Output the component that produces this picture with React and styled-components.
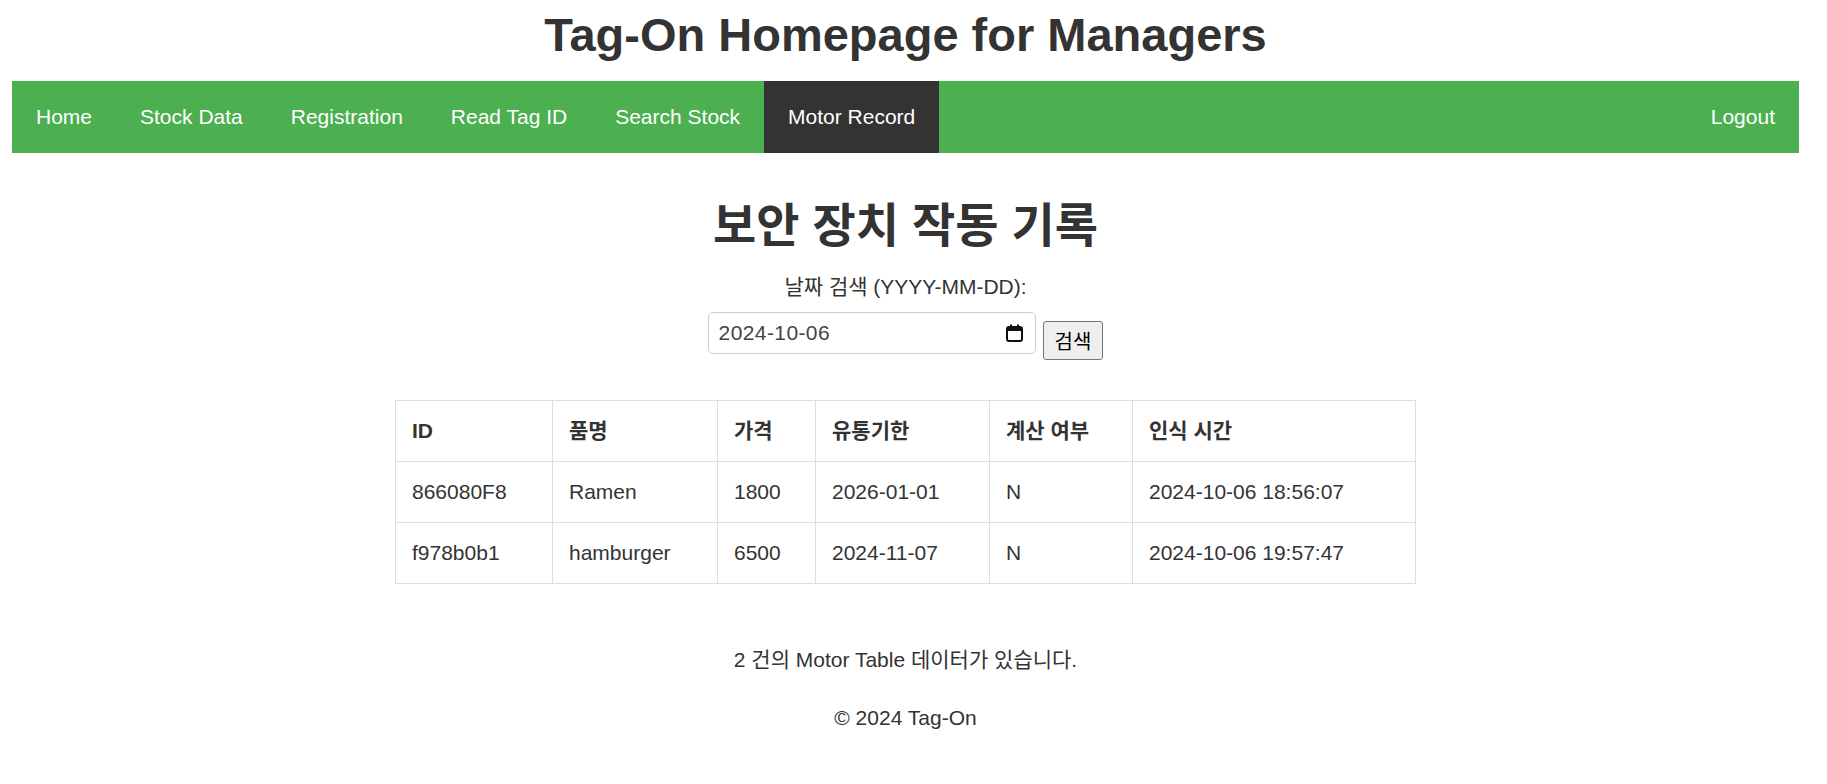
import React from 'react';
import styled, { createGlobalStyle } from 'styled-components';

const GlobalStyle = createGlobalStyle`
  body {
    margin: 0;
    background: #fff;
    color: #333;
    font-family: 'Liberation Sans', Arial, 'Noto Sans CJK KR', sans-serif;
  }
`;

const Page = styled.div`
  padding: 8px 28px 0 12px;
`;

const SiteTitle = styled.h1`
  margin: 0 0 19px;
  font-size: 47px;
  line-height: 54px;
  font-weight: bold;
  text-align: center;
  color: #333;
`;

const Nav = styled.nav`
  display: flex;
  background-color: #4caf50;
  height: 72px;
`;

const NavLink = styled.a`
  display: block;
  padding: 24px;
  font-size: 21px;
  line-height: 24px;
  color: #fff;
  text-decoration: none;
  background-color: ${(props) => (props.active ? '#333' : 'transparent')};
  ${(props) => (props.right ? 'margin-left: auto;' : '')}
`;

const Main = styled.main`
  display: flex;
  flex-direction: column;
  align-items: center;
  text-align: center;
`;

const PageTitle = styled.h2`
  margin: 45px 0 22px;
  font-size: 47px;
  line-height: 55px;
  font-weight: bold;
`;

const Label = styled.label`
  display: block;
  font-size: 21px;
  line-height: 24px;
`;

const SearchRow = styled.form`
  display: flex;
  align-items: flex-start;
  gap: 7px;
  margin-top: 13px;
`;

const DateField = styled.div`
  box-sizing: border-box;
  display: flex;
  align-items: center;
  width: 328px;
  height: 42px;
  padding: 0 12px 0 10px;
  border: 1px solid #ccc;
  border-radius: 5px;
  background: #fff;
`;

const DateText = styled.input`
  flex: 1;
  min-width: 0;
  border: 0;
  outline: none;
  padding: 0;
  background: transparent;
  font-family: 'Liberation Sans', Arial, sans-serif;
  font-size: 21px;
  letter-spacing: 0.4px;
  color: #444;
`;

const CalendarIcon = styled.svg`
  width: 17px;
  height: 18px;
  flex: none;
`;

const SearchButton = styled.button`
  box-sizing: border-box;
  margin-top: 9px;
  height: 39px;
  padding: 0 11px;
  background: #efefef;
  border: 1px solid #767676;
  border-radius: 3px;
  font-family: 'Liberation Sans', 'Noto Sans CJK KR', sans-serif;
  font-size: 20px;
  color: #000;
`;

const Table = styled.table`
  margin-top: 40px;
  width: 1020px;
  table-layout: fixed;
  border-collapse: collapse;
  text-align: left;
`;

const Cell = styled.td`
  padding: 18px 16px;
  border: 1px solid #ddd;
  font-size: 21px;
  line-height: 24px;
  font-weight: ${(props) => (props.head ? 'bold' : 'normal')};
  white-space: nowrap;
`;

const Note = styled.p`
  margin: 64px 0 0;
  font-size: 21px;
  line-height: 24px;
`;

const Footer = styled.footer`
  margin-top: 34px;
  font-size: 21px;
  line-height: 24px;
  text-align: center;
`;

const links = ['Home', 'Stock Data', 'Registration', 'Read Tag ID', 'Search Stock', 'Motor Record'];
const colWidths = [157, 165, 98, 174, 143, 283];
const heads = ['ID', '품명', '가격', '유통기한', '계산 여부', '인식 시간'];
const rows = [
  ['866080F8', 'Ramen', '1800', '2026-01-01', 'N', '2024-10-06 18:56:07'],
  ['f978b0b1', 'hamburger', '6500', '2024-11-07', 'N', '2024-10-06 19:57:47'],
];

export default function App() {
  return (
    <Page>
      <GlobalStyle />
      <SiteTitle>Tag-On Homepage for Managers</SiteTitle>
      <Nav>
        {links.map((l) => (
          <NavLink key={l} href="#" active={l === 'Motor Record' ? 1 : 0}>
            {l}
          </NavLink>
        ))}
        <NavLink href="#" right={1}>
          Logout
        </NavLink>
      </Nav>
      <Main>
        <PageTitle>보안 장치 작동 기록</PageTitle>
        <Label htmlFor="date">날짜 검색 (YYYY-MM-DD):</Label>
        <SearchRow onSubmit={(e) => e.preventDefault()}>
          <DateField>
            <DateText id="date" type="text" defaultValue="2024-10-06" />
            <CalendarIcon viewBox="0 0 17 18">
              <rect x="1" y="3" width="15" height="14" rx="2" fill="none" stroke="#111" strokeWidth="2" />
              <rect x="1" y="3" width="15" height="4" fill="#111" />
              <rect x="4" y="0.5" width="2" height="4" fill="#111" />
              <rect x="11" y="0.5" width="2" height="4" fill="#111" />
            </CalendarIcon>
          </DateField>
          <SearchButton type="submit">검색</SearchButton>
        </SearchRow>
        <Table>
          <colgroup>
            {colWidths.map((w, i) => (
              <col key={i} style={{ width: w }} />
            ))}
          </colgroup>
          <thead>
            <tr>
              {heads.map((h) => (
                <Cell as="th" head={1} key={h}>
                  {h}
                </Cell>
              ))}
            </tr>
          </thead>
          <tbody>
            {rows.map((r) => (
              <tr key={r[0]}>
                {r.map((c, i) => (
                  <Cell key={i}>{c}</Cell>
                ))}
              </tr>
            ))}
          </tbody>
        </Table>
        <Note>2 건의 Motor Table 데이터가 있습니다.</Note>
      </Main>
      <Footer>© 2024 Tag-On</Footer>
    </Page>
  );
}
